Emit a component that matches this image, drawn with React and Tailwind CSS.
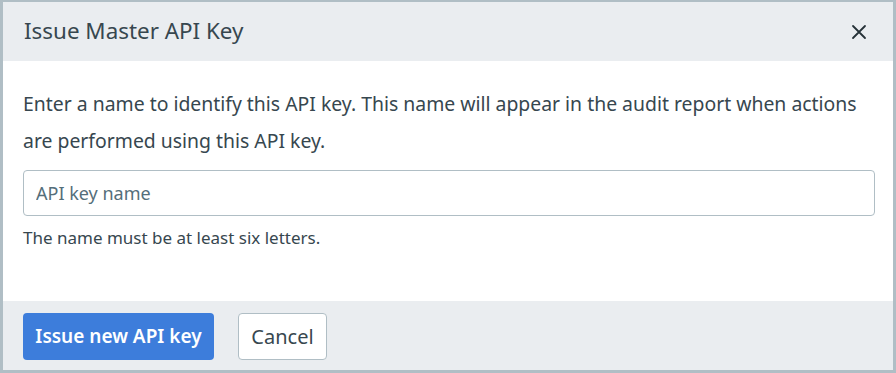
export default function App() {
  return (
    <div
      className="w-[896px] h-[373px] bg-white border-[3px] border-t-2 border-[#b0bec5] flex flex-col text-[#37474f]"
      style={{ fontFamily: '"Noto Sans", "Open Sans", sans-serif' }}
    >
      <div className="h-[59px] shrink-0 bg-[#eaedf0] flex items-center justify-between pl-[21px] pr-[26px]">
        <h2 className="text-[22.4px] leading-none">Issue Master API Key</h2>
        <button className="text-[#263238]">
          <svg width="16" height="16" viewBox="0 0 16 16" fill="none" stroke="currentColor" strokeWidth="1.8" strokeLinecap="round">
            <path d="M2 2 L14 14 M14 2 L2 14" />
          </svg>
        </button>
      </div>
      <div className="flex-1 pl-[20px] pr-[18px] pt-[24px]">
        <p className="text-[19.4px] leading-[37px]">
          Enter a name to identify this API key. This name will appear in the audit report when actions are performed using this API key.
        </p>
        <input
          placeholder="API key name"
          className="mt-[11px] w-full h-[46px] border border-[#b0bec5] rounded-[4px] px-[12px] text-[18px] placeholder:text-[#546e7a] outline-none"
        />
        <p className="mt-[12px] text-[17px] leading-5">The name must be at least six letters.</p>
      </div>
      <div className="h-[69px] shrink-0 bg-[#eaedf0] flex items-start pt-[12px] gap-[24px] px-[20px]">
        <button className="h-[47px] w-[191px] rounded-[4px] bg-[#3d7ddb] text-white text-[19px] font-semibold">
          Issue new API key
        </button>
        <button className="h-[47px] w-[89px] rounded-[4px] bg-white border border-[#b0bec5] text-[20px]">
          Cancel
        </button>
      </div>
    </div>
  );
}
